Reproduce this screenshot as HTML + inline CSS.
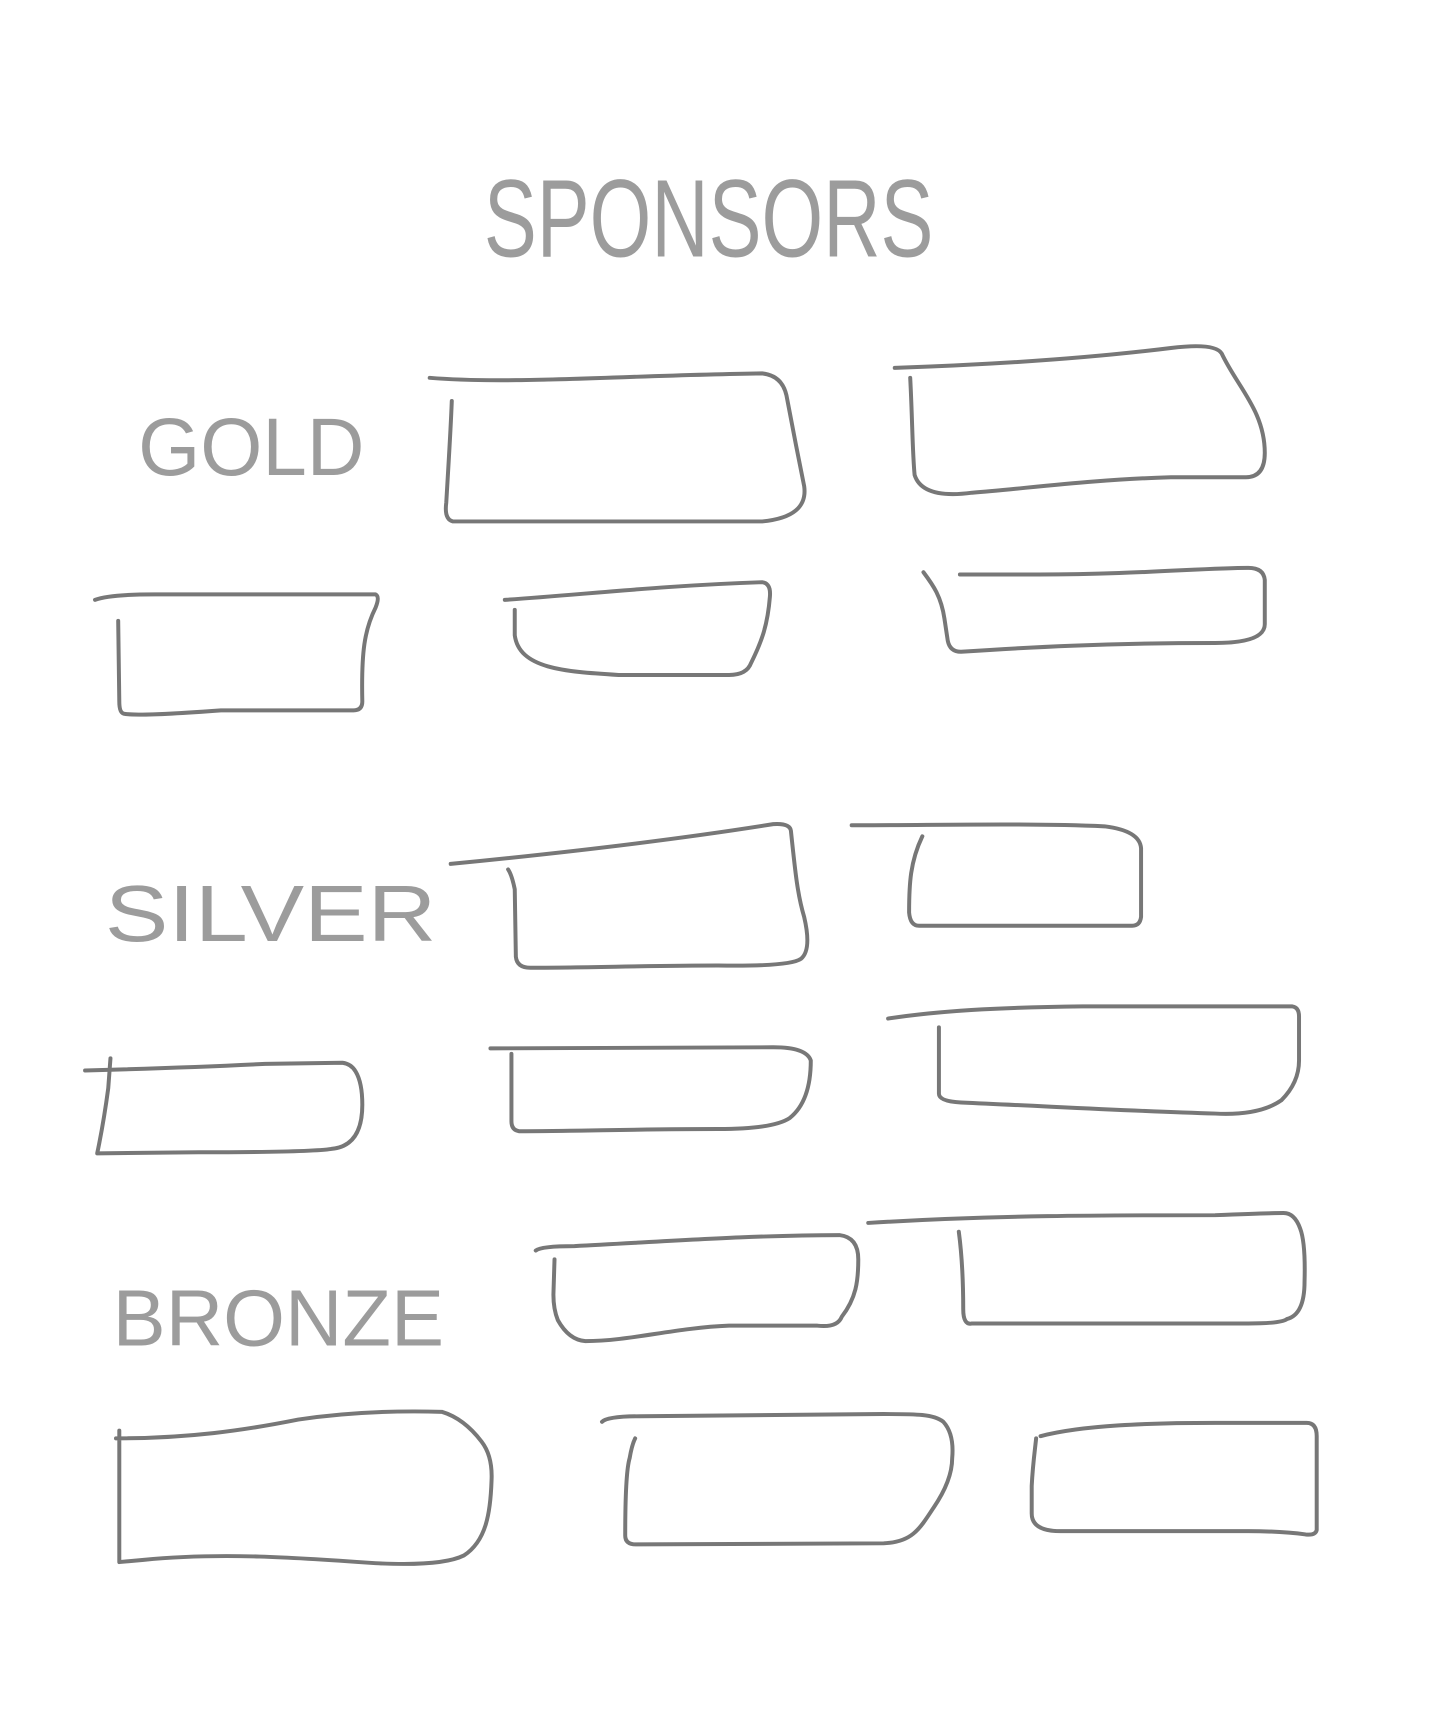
<!DOCTYPE html>
<html><head><meta charset="utf-8"><style>
html,body{margin:0;padding:0;background:#fff;}
svg{display:block;}
</style></head><body>
<svg width="1436" height="1730" viewBox="0 0 1300 1566" preserveAspectRatio="none" xmlns="http://www.w3.org/2000/svg">
<g fill="none" stroke="#777" stroke-width="3.6" stroke-linecap="round" stroke-linejoin="round">
<path d="M389 342 C460 348 560 340 690 338 Q708 340 712 358 C718 390 722 410 728 440 Q732 468 690 472 L410 472 Q402 470 404 455 C406 420 408 390 409 363"/>
<path d="M810 333 C900 330 980 325 1060 315 Q1100 310 1106 320 C1120 350 1145 372 1145 410 Q1145 432 1128 432 L1060 432 C990 434 930 442 880 446 Q835 452 828 430 C826 410 826 380 824 342"/>
<path d="M86 543 Q100 538 140 538 L340 538 Q344 540 340 550 C330 570 327 590 328 635 Q328 643 320 643 L200 643 C160 646 120 648 112 646 Q108 645 108 635 L107 562"/>
<path d="M457 543 C530 538 600 530 690 527 Q698 528 697 540 C695 565 690 580 680 600 Q676 611 660 611 L560 611 C510 608 470 605 466 575 L466 552"/>
<path d="M836 518 C845 530 852 540 855 560 L858 580 Q860 590 870 590 C930 586 1000 582 1100 582 Q1145 582 1145 565 L1145 525 Q1144 514 1130 514 C1090 514 1030 520 940 520 L869 520"/>
<path d="M408 782 C500 773 600 762 700 746 Q715 745 716 752 C720 790 722 810 728 830 Q735 860 725 868 Q715 875 650 874 C590 874 530 876 480 876 Q468 876 467 866 L466 805 C464 795 462 790 460 787"/>
<path d="M771 747 C850 747 930 745 1000 748 Q1032 752 1033 768 L1033 830 Q1032 838 1025 838 L832 838 Q824 838 823 826 C823 800 824 780 835 757"/>
<path d="M77 969 C150 967 200 965 240 963 L310 962 Q318 963 322 970 Q328 980 328 1000 C328 1020 322 1038 300 1040 Q280 1043 180 1043 L88 1044 C92 1025 96 1000 98 985 L100 958"/>
<path d="M444 949 C520 948 600 948 700 948 Q730 948 734 960 C734 980 730 1000 715 1012 Q700 1022 650 1022 C580 1022 520 1024 470 1024 Q463 1023 463 1015 L463 954"/>
<path d="M804 922 C850 915 900 912 980 911 L1170 911 Q1176 912 1176 920 L1176 960 Q1176 980 1160 996 Q1140 1010 1100 1008 C1030 1006 960 1002 870 998 Q850 997 850 990 L850 930"/>
<path d="M485 1132 Q490 1128 520 1128 C600 1124 680 1118 760 1118 Q777 1120 777 1140 C777 1160 775 1175 762 1192 Q758 1202 740 1200 L660 1200 C610 1202 570 1214 530 1214 Q515 1213 505 1195 Q501 1185 501 1172 L502 1140"/>
<path d="M786 1107 C900 1100 1000 1100 1100 1100 Q1150 1098 1162 1098 Q1172 1098 1177 1112 Q1182 1125 1181 1160 Q1181 1190 1165 1194 Q1160 1198 1130 1198 L880 1198 Q872 1200 872 1185 C872 1150 870 1130 868 1115"/>
<path d="M105 1302 C170 1302 220 1295 270 1285 Q330 1276 400 1278 Q420 1284 436 1305 Q446 1318 445 1340 C444 1370 440 1395 420 1408 Q400 1418 340 1415 C270 1410 200 1405 130 1412 L108 1414 L108 1295"/>
<path d="M545 1287 Q550 1282 580 1282 L800 1280 C830 1280 845 1280 854 1287 Q864 1298 862 1320 Q862 1340 845 1365 C832 1385 825 1396 800 1397 L576 1398 Q566 1398 566 1390 C566 1360 567 1330 570 1320 Q572 1308 575 1302"/>
<path d="M942 1300 C980 1290 1040 1288 1100 1288 L1183 1288 Q1192 1288 1192 1300 L1192 1385 Q1191 1390 1182 1389 Q1160 1386 1130 1386 L960 1386 Q934 1386 934 1370 L934 1345 C935 1325 937 1312 938 1302"/>
</g>
<g fill="#777" font-family="Liberation Sans, sans-serif" opacity="0.72">
<text x="438" y="232" font-size="100" textLength="407" lengthAdjust="spacingAndGlyphs">SPONSORS</text>
<text x="125" y="430" font-size="74" textLength="205" lengthAdjust="spacingAndGlyphs">GOLD</text>
<text x="95" y="852" font-size="72" textLength="300" lengthAdjust="spacingAndGlyphs">SILVER</text>
<text x="102" y="1218" font-size="72" textLength="300" lengthAdjust="spacingAndGlyphs">BRONZE</text>
</g>
</svg>
</body></html>
